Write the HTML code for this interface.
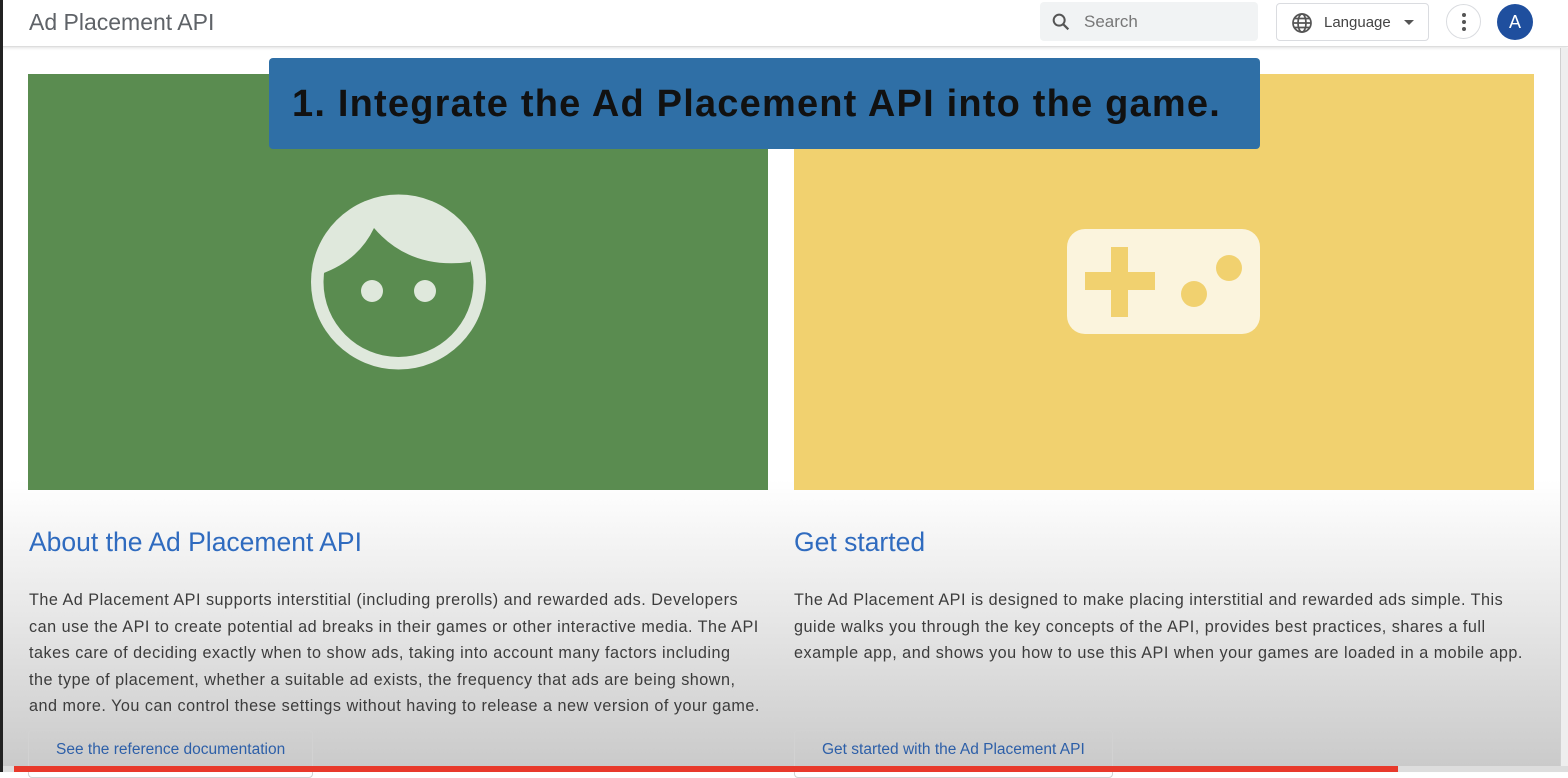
<!DOCTYPE html>
<html><head><meta charset="utf-8"><style>
*{margin:0;padding:0;box-sizing:border-box}
body{width:1568px;height:772px;overflow:hidden;font-family:"Liberation Sans",sans-serif;position:relative;background:linear-gradient(#fff 0,#fff 480px,#e6e6e6 620px,#c9c9c9 772px)}
.hdr{position:absolute;left:0;top:0;width:1568px;height:47px;background:#fff;border-bottom:1px solid #ddd;box-shadow:0 1px 3px rgba(0,0,0,.12)}
.title{position:absolute;left:29px;top:9px;font-size:23px;color:#5f6368}
.search{position:absolute;left:1040px;top:2px;width:218px;height:39px;background:#f1f3f4;border-radius:4px}
.search span{position:absolute;left:44px;top:10px;font-size:17px;color:#777}
.lang{position:absolute;left:1276px;top:3px;width:153px;height:38px;border:1px solid #dadce0;border-radius:4px;background:#fff}
.lang span{position:absolute;left:47px;top:10px;font-size:15px;color:#444}
.dots{position:absolute;left:1446px;top:4px;width:35px;height:35px;border:1px solid #dadce0;border-radius:50%}
.av{position:absolute;left:1497px;top:4px;width:36px;height:36px;border-radius:50%;background:#1f4f9e;color:#fff;font-size:18px;text-align:center;line-height:36px}
.g{position:absolute;left:28px;top:74px;width:740px;height:416px;background:#5a8c50}
.y{position:absolute;left:794px;top:74px;width:740px;height:416px;background:#f1d16f}
.ban{position:absolute;left:269px;top:58px;width:991px;height:91px;background:#2f6fa6;border-radius:4px}
.ban span{position:absolute;left:23px;top:25px;font-size:38px;font-weight:bold;color:#111;letter-spacing:1.2px;white-space:nowrap}
h2{position:absolute;font-weight:normal;font-size:26.5px;color:#2f6bbf;top:527px}
p{position:absolute;font-size:16.2px;line-height:26.5px;color:#3c3c3c;top:587px;white-space:nowrap;letter-spacing:0.5px}
.btn{position:absolute;top:730px;height:48px;border:1px solid #d2d2d2;border-radius:4px;font-size:15.5px;color:#2d5fa8;padding:10px 27px;white-space:nowrap}
.sb{position:absolute;left:1560px;top:48px;width:8px;height:724px;background:#eee;border-left:1px solid #d0d0d0}
</style></head><body>
<div class="hdr">
<div class="title">Ad Placement API</div>
<div class="search"><svg style="position:absolute;left:10px;top:9px" width="22" height="22" viewBox="0 0 24 24"><circle cx="10" cy="10" r="6" fill="none" stroke="#555" stroke-width="2.2"/><path d="M14.5 14.5 20 20" stroke="#555" stroke-width="2.4"/></svg><span>Search</span></div>
<div class="lang"><svg style="position:absolute;left:13px;top:7px" width="24" height="24" viewBox="0 0 24 24" fill="none" stroke="#555" stroke-width="1.7"><circle cx="12" cy="12" r="9"/><ellipse cx="12" cy="12" rx="4" ry="9"/><path d="M3 12h18M4.5 7.5h15M4.5 16.5h15"/></svg><span>Language</span><svg style="position:absolute;left:126px;top:15px" width="12" height="8"><path d="M1 1h10L6 6z" fill="#555"/></svg></div>
<div class="dots"><svg width="35" height="35"><circle cx="17" cy="10" r="2" fill="#555"/><circle cx="17" cy="17" r="2" fill="#555"/><circle cx="17" cy="24" r="2" fill="#555"/></svg></div>
<div class="av">A</div>
</div>
<div class="g"></div>
<div class="y"></div>
<svg style="position:absolute;left:0;top:0" width="1568" height="500">
<defs><clipPath id="c"><circle cx="398.5" cy="282" r="78"/></clipPath></defs>
<circle cx="398.5" cy="282" r="87.5" fill="#dfe8dc"/>
<circle cx="398.5" cy="282" r="75" fill="#5a8c50"/>
<path clip-path="url(#c)" d="M318 275 Q358 262 374 228 Q410 270 470 262 L480 190 L318 190 Z" fill="#dfe8dc"/>
<circle cx="372" cy="291" r="11" fill="#dfe8dc"/><circle cx="425" cy="291" r="11" fill="#dfe8dc"/>
<rect x="1067" y="229" width="193" height="105" rx="18" fill="#fbf4dd"/>
<rect x="1111" y="247" width="17" height="70" fill="#f1d16f"/><rect x="1085" y="272" width="70" height="18" fill="#f1d16f"/>
<circle cx="1229" cy="268" r="13" fill="#f1d16f"/><circle cx="1194" cy="294" r="13" fill="#f1d16f"/>
</svg>
<div class="ban"><span>1. Integrate the Ad Placement API into the game.</span></div>
<h2 style="left:29px">About the Ad Placement API</h2>
<h2 style="left:794px">Get started</h2>
<p style="left:29px">The Ad Placement API supports interstitial (including prerolls) and rewarded ads. Developers<br>can use the API to create potential ad breaks in their games or other interactive media. The API<br>takes care of deciding exactly when to show ads, taking into account many factors including<br>the type of placement, whether a suitable ad exists, the frequency that ads are being shown,<br>and more. You can control these settings without having to release a new version of your game.</p>
<p style="left:794px">The Ad Placement API is designed to make placing interstitial and rewarded ads simple. This<br>guide walks you through the key concepts of the API, provides best practices, shares a full<br>example app, and shows you how to use this API when your games are loaded in a mobile app.</p>
<div class="btn" style="left:28px">See the reference documentation</div>
<div class="btn" style="left:794px">Get started with the Ad Placement API</div>
<div class="sb"></div>
<div style="position:absolute;left:0;top:766px;width:1568px;height:6px;background:#ddd"></div>
<div style="position:absolute;left:14px;top:766px;width:1384px;height:6px;background:#e8392b"></div>
<div style="position:absolute;left:0;top:0;width:3px;height:772px;background:#222"></div>
</body></html>
